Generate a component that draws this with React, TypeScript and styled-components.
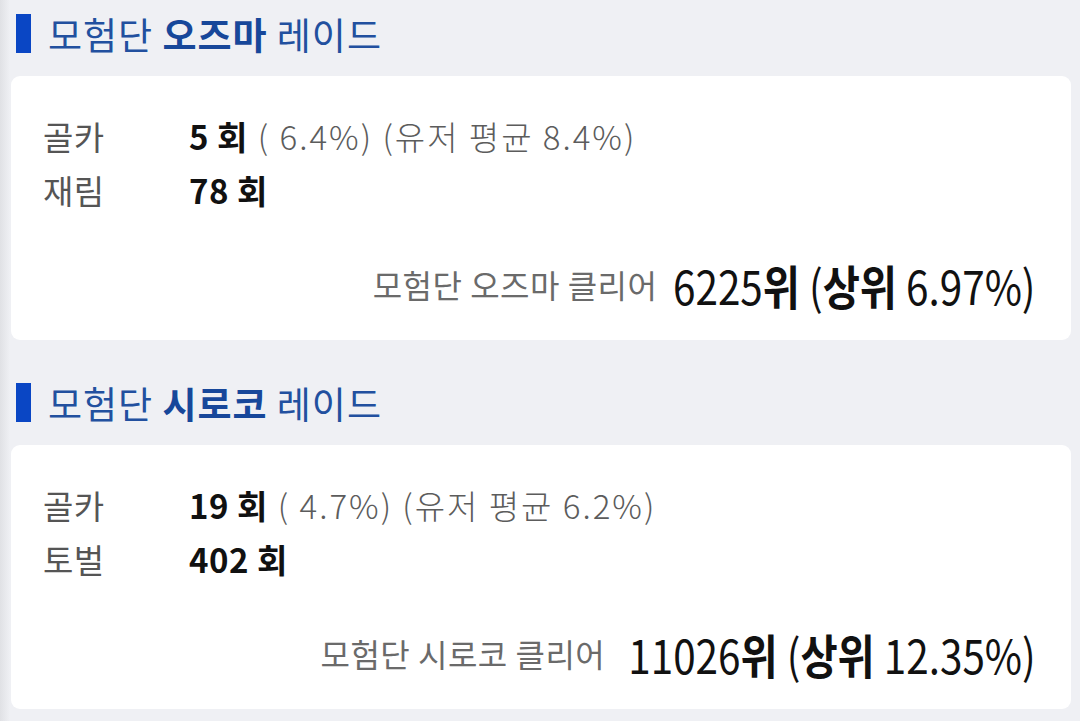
import React from 'react';
import styled, { createGlobalStyle } from 'styled-components';

const GlobalStyle = createGlobalStyle`
  html, body {
    margin: 0;
    padding: 0;
    background: #eff0f4;
    font-family: 'Noto Sans CJK KR', 'Noto Sans', sans-serif;
  }
`;

const Page = styled.div`
  width: 1080px;
  height: 721px;
  overflow: hidden;
  box-sizing: border-box;
  padding: 14px 9px 0 11px;
  background: linear-gradient(90deg, #e0e1e5 0px, #eff0f4 10px);
`;

const Section = styled.section`
  & + & {
    margin-top: 43px;
  }
`;

const Header = styled.h2`
  display: flex;
  align-items: center;
  gap: 17px;
  margin: 0 0 23px;
  padding-left: 5px;
  height: 39px;
  font-size: 37px;
  font-weight: 400;
  letter-spacing: 1px;
  color: #22509f;
`;

const Bar = styled.span`
  width: 15px;
  height: 39px;
  background: #0a46c4;
`;

const Strong = styled.b`
  font-weight: 700;
  color: #17479a;
`;

const Card = styled.div`
  background: #fff;
  border-radius: 9px;
  height: 264px;
  box-sizing: border-box;
  padding: 33px 35px 26px 32px;
  display: flex;
  flex-direction: column;
`;

const Row = styled.div`
  display: flex;
  align-items: center;
  height: 54px;
  font-size: 33px;
`;

const Label = styled.span`
  width: 146px;
  color: #555;
  letter-spacing: 0.5px;
`;

const Count = styled.b`
  font-weight: 700;
  color: #111;
  letter-spacing: 0.5px;
  margin-right: 10px;
`;

const Note = styled.span`
  color: #5c5c5c;
  font-weight: 300;
  letter-spacing: 2px;
`;

const RankLine = styled.div`
  margin-top: auto;
  height: 60px;
  display: flex;
  align-items: center;
  justify-content: flex-end;
`;

const RankLabel = styled.span`
  font-size: 32px;
  letter-spacing: 0.5px;
  color: #6a6a6a;
  margin-right: 16px;
`;

const RankValue = styled.span`
  display: inline-block;
  font-size: 47px;
  color: #111;
  transform: scaleX(0.86);
  transform-origin: right center;
  margin-left: -59px;
  white-space: nowrap;

  b {
    font-weight: 700;
  }
`;

type Raid = {
  name: string;
  rows: { label: string; count: number; note?: string }[];
  rank: string;
  top: string;
};

const raids: Raid[] = [
  {
    name: '오즈마',
    rows: [
      { label: '골카', count: 5, note: '( 6.4%) (유저 평균 8.4%)' },
      { label: '재림', count: 78 },
    ],
    rank: '6225',
    top: '6.97%)',
  },
  {
    name: '시로코',
    rows: [
      { label: '골카', count: 19, note: '( 4.7%) (유저 평균 6.2%)' },
      { label: '토벌', count: 402 },
    ],
    rank: '11026',
    top: '12.35%)',
  },
];

export default function App() {
  return (
    <>
      <GlobalStyle />
      <Page>
        {raids.map((raid) => (
          <Section key={raid.name}>
            <Header>
              <Bar />
              <span>
                모험단 <Strong>{raid.name}</Strong> 레이드
              </span>
            </Header>
            <Card>
              {raid.rows.map((row) => (
                <Row key={row.label}>
                  <Label>{row.label}</Label>
                  <Count>{row.count} 회</Count>
                  {row.note && <Note>{row.note}</Note>}
                </Row>
              ))}
              <RankLine>
                <RankLabel>모험단 {raid.name} 클리어</RankLabel>
                <RankValue>
                  {raid.rank}
                  <b>위</b> (<b>상위</b> {raid.top}
                </RankValue>
              </RankLine>
            </Card>
          </Section>
        ))}
      </Page>
    </>
  );
}
